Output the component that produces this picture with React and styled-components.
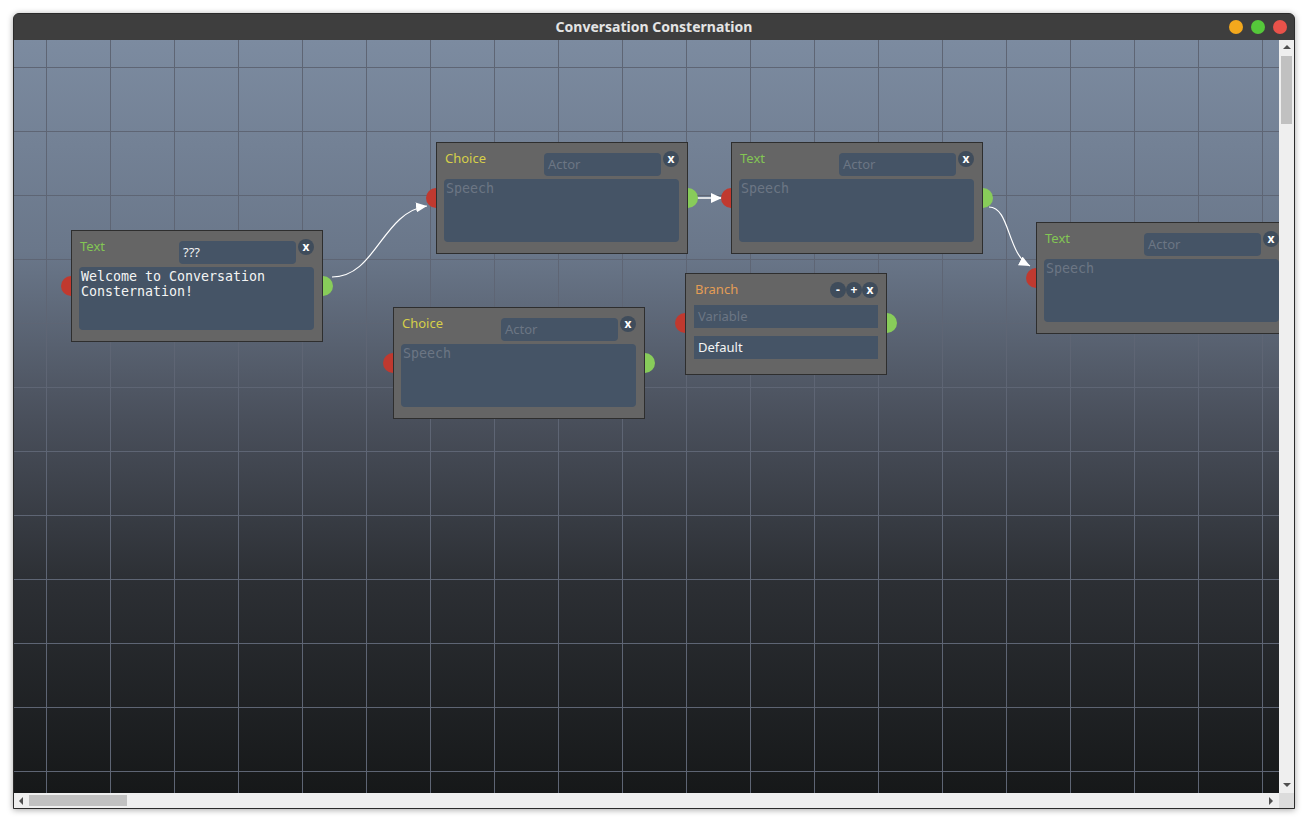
import React from "react";
import styled, { createGlobalStyle } from "styled-components";

const Global = createGlobalStyle`
  html, body { margin: 0; padding: 0; background: #ffffff; }
  body { font-family: "Noto Sans", "DejaVu Sans", sans-serif; }
  * { box-sizing: border-box; }
`;

const Page = styled.div`
  width: 1308px;
  height: 822px;
  padding: 13px 0 0 13px;
`;

const Window = styled.div`
  width: 1282px;
  height: 796px;
  display: flex;
  flex-direction: column;
  border: 1px solid #2b2b2b;
  border-radius: 6px 6px 0 0;
  overflow: hidden;
  box-shadow: 0 1px 6px rgba(0, 0, 0, 0.35);
  background: #3e3e3e;
`;

const TitleBar = styled.div`
  height: 26px;
  flex: none;
  position: relative;
  display: flex;
  align-items: center;
  justify-content: center;
  background: #3e3e3e;
`;

const Title = styled.div`
  color: #e4e4e4;
  font-family: "Noto Sans", sans-serif;
  font-weight: 700;
  font-size: 14px;
  line-height: 18px;
  margin-top: -1px;
`;

const Controls = styled.div`
  position: absolute;
  right: 7px;
  top: 6px;
  display: flex;
  gap: 8px;
`;

const Dot = styled.span`
  width: 14px;
  height: 14px;
  border-radius: 50%;
  background: ${(p) => p.$c};
`;

const Main = styled.div`
  flex: none;
  height: 753px;
  display: flex;
`;

const Canvas = styled.div`
  position: relative;
  flex: 1;
  overflow: hidden;
  background:
    linear-gradient(to right, #5e6574 1px, transparent 1px) 32px 0 / 64px 64px,
    linear-gradient(to bottom, #5e6574 1px, transparent 1px) 0 27px / 64px 64px,
    linear-gradient(to bottom, #7c8ba0 0%, #6a778a 28%, #4a505c 50%, #2c2f34 72%, #161819 100%) 0 0 / 100% 100% no-repeat;
`;

const Wires = styled.svg`
  position: absolute;
  left: 0;
  top: 0;
  width: 100%;
  height: 100%;
  pointer-events: none;
`;

const VScroll = styled.div`
  width: 15px;
  flex: none;
  background: #efefef;
  display: flex;
  flex-direction: column;
  align-items: center;
  padding: 5px 0 6px;
`;

const HScroll = styled.div`
  flex: 1;
  background: #efefef;
  display: flex;
  align-items: center;
  padding: 0 6px 0 5px;
`;

const Bottom = styled.div`
  flex: none;
  height: 15px;
  display: flex;
`;

const Corner = styled.div`
  width: 15px;
  background: #dcdcdc;
`;

const Spacer = styled.div`
  flex: 1;
`;

const Arrow = styled.span`
  width: 0;
  height: 0;
  border-style: solid;
  border-color: transparent;
  ${(p) =>
    p.$dir === "up"
      ? "border-width: 0 4px 4px 4px; border-bottom-color: #505050;"
      : p.$dir === "down"
      ? "border-width: 4px 4px 0 4px; border-top-color: #505050;"
      : p.$dir === "left"
      ? "border-width: 4px 4px 4px 0; border-right-color: #505050;"
      : "border-width: 4px 0 4px 4px; border-left-color: #505050;"}
`;

const VThumb = styled.div`
  width: 11px;
  height: 68px;
  margin-top: 7px;
  background: #c1c1c1;
`;

const HThumb = styled.div`
  width: 98px;
  height: 11px;
  margin-left: 6px;
  background: #c1c1c1;
`;

/* ---------- graph nodes ---------- */

const NodeWrap = styled.div`
  position: absolute;
  left: ${(p) => p.$x}px;
  top: ${(p) => p.$y}px;
  width: ${(p) => p.$w}px;
`;

const Port = styled.span`
  position: absolute;
  width: 20px;
  height: 20px;
  border-radius: 50%;
  top: ${(p) => p.$y - 10}px;
  ${(p) => (p.$side === "left" ? "left: -10px;" : "right: -10px;")}
  background: ${(p) => (p.$side === "left" ? "#c0392f" : "#88cc5a")};
`;

const Body = styled.div`
  position: relative;
  background: #656565;
  border: 1px solid #2e2e2e;
  padding: 8px 8px 11px 7px;
  display: flex;
  flex-direction: column;
`;

const BranchBody = styled(Body)`
  padding: 8px 8px 15px 8px;
  gap: 8px;
`;

const Header = styled.div`
  display: flex;
  align-items: flex-start;
  height: ${(p) => p.$h}px;
`;

const NodeTitle = styled.div`
  flex: 1;
  padding-left: 1px;
  font-family: "Noto Sans", sans-serif;
  font-size: 13px;
  line-height: 15px;
  color: ${(p) => p.$c};
`;

const ActorField = styled.div`
  width: 117px;
  height: 23px;
  margin-top: 2px;
  border-radius: 4px;
  background: #455466;
  padding: 0 4px;
  font-family: "Noto Sans", sans-serif;
  font-size: 13px;
  line-height: 23px;
  color: ${(p) => (p.$placeholder ? "#6c7684" : "#f2f2f2")};
`;

const RoundBtn = styled.span`
  width: 16px;
  height: 16px;
  margin-left: ${(p) => p.$ml ?? 0}px;
  border-radius: 50%;
  background: #3f4c5b;
  color: #ffffff;
  font-family: "Noto Sans", sans-serif;
  font-weight: 700;
  font-size: 12px;
  line-height: 15px;
  text-align: center;
  flex: none;
`;

const Speech = styled.div`
  height: 63px;
  border-radius: 4px;
  background: #455466;
  padding: 2px 2px;
  font-family: "DejaVu Sans Mono", monospace;
  font-size: 13.3px;
  line-height: 15px;
  white-space: pre;
  color: ${(p) => (p.$placeholder ? "#6c7684" : "#f4f4f4")};
`;

const LineField = styled.div`
  height: 23px;
  background: #455466;
  padding: 0 4px;
  font-family: "Noto Sans", sans-serif;
  font-size: 13px;
  line-height: 23px;
  color: ${(p) => (p.$placeholder ? "#6c7684" : "#f4f4f4")};
`;

const kindColor = { Text: "#83c654", Choice: "#d6cf4a" };

function DialogNode({ x, y, kind, actor, speech }) {
  return (
    <NodeWrap $x={x} $y={y} $w={252}>
      <Port $side="left" $y={56} />
      <Port $side="right" $y={56} />
      <Body>
        <Header $h={28}>
          <NodeTitle $c={kindColor[kind]}>{kind}</NodeTitle>
          <ActorField $placeholder={!actor}>{actor || "Actor"}</ActorField>
          <RoundBtn $ml={2}>x</RoundBtn>
        </Header>
        <Speech $placeholder={!speech}>{speech || "Speech"}</Speech>
      </Body>
    </NodeWrap>
  );
}

function BranchNode({ x, y }) {
  return (
    <NodeWrap $x={x} $y={y} $w={202}>
      <Port $side="left" $y={50} />
      <Port $side="right" $y={50} />
      <BranchBody>
        <Header $h={15}>
          <NodeTitle $c="#e39d55">Branch</NodeTitle>
          <RoundBtn>-</RoundBtn>
          <RoundBtn>+</RoundBtn>
          <RoundBtn>x</RoundBtn>
        </Header>
        <LineField $placeholder>Variable</LineField>
        <LineField>Default</LineField>
      </BranchBody>
    </NodeWrap>
  );
}

export default function App() {
  return (
    <Page>
      <Global />
      <Window>
        <TitleBar>
          <Title>Conversation Consternation</Title>
          <Controls>
            <Dot $c="#f3a81d" />
            <Dot $c="#55c83a" />
            <Dot $c="#e8524a" />
          </Controls>
        </TitleBar>
        <Main>
          <Canvas>
            <Wires viewBox="0 0 1265 753">
              <defs>
                <marker
                  id="arrow"
                  viewBox="0 0 10 9"
                  refX="10"
                  refY="4.5"
                  markerWidth="11"
                  markerHeight="10"
                  markerUnits="userSpaceOnUse"
                  orient="auto"
                >
                  <path d="M0,0 L10,4.5 L0,9 z" fill="#ffffff" />
                </marker>
              </defs>
              <path
                d="M318 237 C 362 237, 368 172, 413 166"
                fill="none"
                stroke="#ffffff"
                strokeWidth="1.2"
                markerEnd="url(#arrow)"
              />
              <path
                d="M683 158 L708 158"
                fill="none"
                stroke="#ffffff"
                strokeWidth="1.4"
                markerEnd="url(#arrow)"
              />
              <path
                d="M975 167 C 996 167, 993 214, 1016 226"
                fill="none"
                stroke="#ffffff"
                strokeWidth="1.2"
                markerEnd="url(#arrow)"
              />
            </Wires>
            <DialogNode
              x={57}
              y={190}
              kind="Text"
              actor="???"
              speech={"Welcome to Conversation\nConsternation!"}
            />
            <DialogNode x={422} y={102} kind="Choice" />
            <DialogNode x={717} y={102} kind="Text" />
            <DialogNode x={1022} y={182} kind="Text" />
            <DialogNode x={379} y={267} kind="Choice" />
            <BranchNode x={671} y={233} />
          </Canvas>
          <VScroll>
            <Arrow $dir="up" />
            <VThumb />
            <Spacer />
            <Arrow $dir="down" />
          </VScroll>
        </Main>
        <Bottom>
          <HScroll>
            <Arrow $dir="left" />
            <HThumb />
            <Spacer />
            <Arrow $dir="right" />
          </HScroll>
          <Corner />
        </Bottom>
      </Window>
    </Page>
  );
}
